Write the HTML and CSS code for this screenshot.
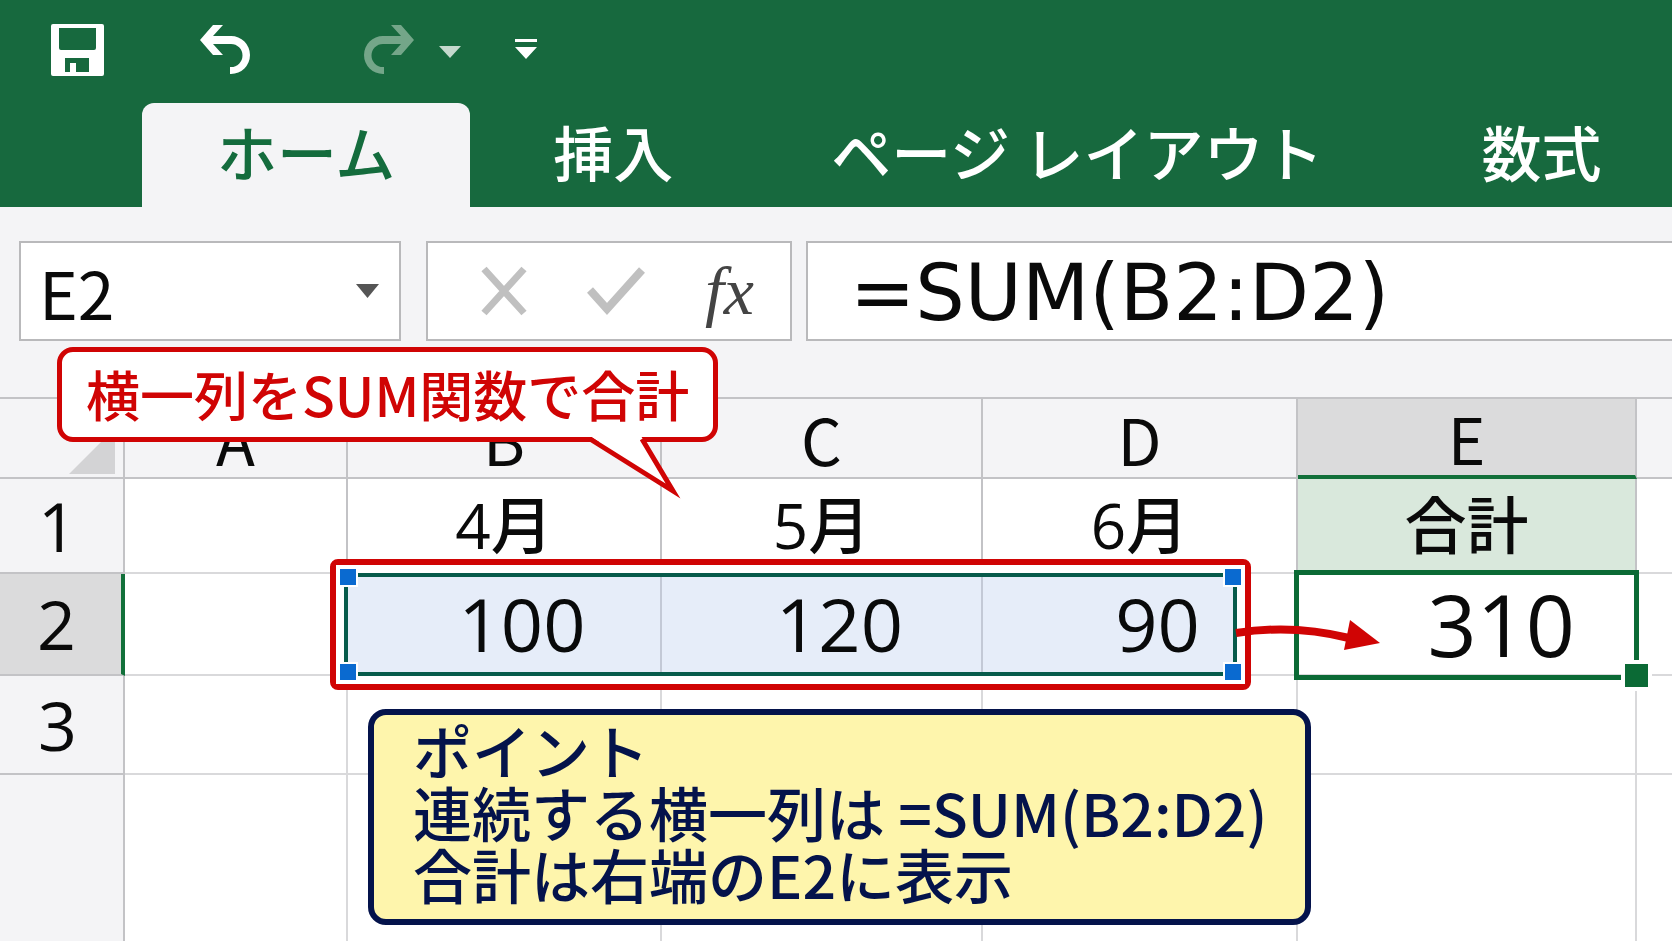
FILE: index.html
```html
<!DOCTYPE html>
<html lang="ja">
<head>
    <meta charset="UTF-8">
    <meta name="viewport" content="width=device-width, initial-scale=1.0">
    <title>横一列をSUM関数で合計</title>
    <link rel="stylesheet" href="styles.css">
</head>
<body>
    <header class="ribbon">
        <div class="quick-access">
            <button class="save" aria-label="上書き保存">
                <svg width="53" height="52" viewBox="0 0 53 52">
                    <path fill="#fff" fill-rule="evenodd" d="M2 0H51Q53 0 53 2V50Q53 52 51 52H2Q0 52 0 50V2Q0 0 2 0ZM8 4V24Q8 26 10 26H43Q45 26 45 24V4ZM14 34V48H19V39H25V48H38V34Z"/>
                </svg>
            </button>
            <button class="undo" aria-label="元に戻す">
                <svg width="50" height="50" viewBox="0 0 50 50">
                    <path fill="#fff" d="M0 15L13 0H23L13 11H31A19 19 0 0 1 31 49H30V42H31A11 11 0 0 0 31 19H13L23 30H13Z"/>
                </svg>
            </button>
            <button class="redo" aria-label="やり直し">
                <svg width="50" height="50" viewBox="0 0 50 50">
                    <path fill="#74a689" d="M50 15L37 0H27L37 11H19A19 19 0 0 0 19 49H20V42H19A11 11 0 0 1 19 19H37L27 30H37Z"/>
                </svg>
            </button>
            <button class="redo-menu" aria-label="やり直しの一覧">
                <svg width="22" height="18" viewBox="0 0 22 18"><path fill="#c5d9cd" d="M0 5H22L11 17Z"/></svg>
            </button>
            <button aria-label="クイック アクセスのカスタマイズ">
                <svg width="22" height="24" viewBox="0 0 22 24"><path fill="#fff" d="M0 1H22V4H0ZM0 9H22L11 21Z"/></svg>
            </button>
        </div>
        <nav class="tabs">
            <button class="tab active">ホーム</button>
            <button class="tab">挿入</button>
            <button class="tab">ページ レイアウト</button>
            <button class="tab">数式</button>
        </nav>
    </header>

    <div class="formula-bar">
        <div class="name-box">
            <select aria-label="名前ボックス">
                <option>E2</option>
            </select>
            <svg width="23" height="14" viewBox="0 0 23 14"><path fill="#555" d="M0 0H23L11.500 14Z"/></svg>
        </div>
        <div class="formula-buttons">
            <button aria-label="キャンセル">
                <svg width="48" height="50" viewBox="0 0 48 50"><path fill="none" stroke="#c0c0c0" stroke-width="7" d="M4 3L44 47M44 3L4 47"/></svg>
            </button>
            <button aria-label="入力">
                <svg width="58" height="50" viewBox="0 0 58 50"><path fill="none" stroke="#c0c0c0" stroke-width="8" d="M3 24L20 43L55 4"/></svg>
            </button>
            <button class="fx" aria-label="関数の挿入">fx</button>
        </div>
        <input class="formula" type="text" aria-label="数式バー" value="=SUM(B2:D2)">
    </div>

    <main class="sheet">
        <table>
            <colgroup>
                <col class="col-head">
                <col class="col-a">
                <col class="col-b">
                <col class="col-c">
                <col class="col-d">
                <col class="col-e">
                <col>
            </colgroup>
            <thead>
                <tr>
                    <th class="corner"><svg width="46" height="46" viewBox="0 0 46 46"><path fill="#d3d3d5" d="M46 0V46H0Z"/></svg></th>
                    <th>A</th>
                    <th>B</th>
                    <th>C</th>
                    <th>D</th>
                    <th class="current">E</th>
                    <th></th>
                </tr>
            </thead>
            <tbody>
                <tr class="row-1">
                    <th>1</th>
                    <td></td>
                    <td>4月</td>
                    <td>5月</td>
                    <td>6月</td>
                    <td class="total-head">合計</td>
                    <td></td>
                </tr>
                <tr class="row-2">
                    <th class="current">2</th>
                    <td></td>
                    <td class="number">100</td>
                    <td class="number">120</td>
                    <td class="number">90</td>
                    <td class="total">310<span class="fill-handle"></span></td>
                    <td></td>
                </tr>
                <tr class="row-3">
                    <th>3</th>
                    <td></td>
                    <td></td>
                    <td></td>
                    <td></td>
                    <td></td>
                    <td></td>
                </tr>
                <tr class="row-4">
                    <th></th>
                    <td></td>
                    <td></td>
                    <td></td>
                    <td></td>
                    <td></td>
                    <td></td>
                </tr>
            </tbody>
        </table>

        <!-- summed range B2:D2 -->
        <div class="range-frame">
            <div class="range">
                <span class="handle top left"></span>
                <span class="handle top right"></span>
                <span class="handle bottom left"></span>
                <span class="handle bottom right"></span>
            </div>
        </div>
        <svg class="arrow" width="146" height="40" viewBox="0 0 146 40">
            <path fill="none" stroke="#d00404" stroke-width="8" d="M1 16Q58 7 114 21"/>
            <path fill="#d00404" d="M115 3L145 26L109 33Z"/>
        </svg>

        <div class="callout">
            横一列をSUM関数で合計
            <svg class="tail" width="104" height="68" viewBox="0 0 104 68">
                <path fill="#fff" d="M8 2H59L91 56Z"/>
                <path fill="none" stroke="#d00404" stroke-width="5" stroke-miterlimit="10" d="M8 5L91 57L60 5"/>
            </svg>
        </div>

        <div class="point">
            <p>ポイント</p>
            <p>連続する横一列は =SUM(B2:D2)</p>
            <p>合計は右端のE2に表示</p>
        </div>
    </main>
</body>
</html>
```
FILE: styles.css
```css
* {
    box-sizing: border-box;
}

body {
    margin: 0;
    min-height: 100vh;
    overflow: hidden;
    background: #f4f4f6;
    color: #0a0a0a;
    font-family: 'Noto Sans CJK JP', sans-serif;
    font-weight: 500;
}

button {
    padding: 0;
    border: none;
    background: none;
    font: inherit;
    color: inherit;
    cursor: pointer;
}

svg {
    display: block;
}

/* ribbon */
.ribbon {
    background: #17693e;
}

.quick-access {
    display: flex;
    align-items: center;
    height: 103px;
    padding: 0 0 4px 51px;
}

.save {
    margin-right: 96px;
}

.undo {
    margin-right: 114px;
}

.redo {
    margin-right: 25px;
}

.redo-menu {
    margin-right: 54px;
}

.tabs {
    display: flex;
    gap: 8px;
    padding-left: 142px;
}

.tab {
    height: 104px;
    padding: 0 75px 8px;
    border-radius: 12px 12px 0 0;
    color: #fff;
    font-size: 60px;
    line-height: 60px;
    white-space: nowrap;
}

.tab.active {
    background: #f4f4f6;
    color: #146c3d;
}

/* formula bar */
.formula-bar {
    display: flex;
    height: 190px;
    padding: 34px 0 56px 19px;
}

.name-box,
.formula-buttons,
.formula {
    border: 2px solid #b9b9bb;
    background: #fff;
}

.name-box {
    display: flex;
    align-items: center;
    width: 382px;
    margin-right: 25px;
    padding-right: 20px;
}

.name-box select {
    flex: 1;
    height: 100%;
    padding: 0 0 6px 18px;
    border: none;
    background: none;
    color: inherit;
    font: inherit;
    font-size: 66px;
    font-weight: 400;
    appearance: none;
}

.formula-buttons {
    display: flex;
    align-items: center;
    justify-content: space-between;
    width: 366px;
    margin-right: 14px;
    padding: 0 36px 0 52px;
}

.fx {
    color: #444;
    font-family: 'Liberation Serif', serif;
    font-size: 68px;
    font-style: italic;
    line-height: 68px;
}

.formula {
    flex: 1;
    min-width: 0;
    padding: 4px 0 0 42px;
    border-right: none;
    color: inherit;
    font-family: 'DejaVu Sans', sans-serif;
    font-size: 78px;
}

/* sheet */
.sheet {
    position: relative;
    border-top: 2px solid #c3c3c6;
}

table {
    width: 100%;
    table-layout: fixed;
    border-spacing: 0;
    background: #fff;
}

.col-head {
    width: 125px;
}

.col-a {
    width: 223px;
}

.col-b {
    width: 314px;
}

.col-c {
    width: 321px;
}

.col-d {
    width: 315px;
}

.col-e {
    width: 339px;
}

th,
td {
    padding: 0;
    border-right: 2px solid #d9d9db;
    border-bottom: 2px solid #d9d9db;
    font-size: 64px;
    font-weight: 400;
    line-height: 64px;
    text-align: center;
}

th {
    border-color: #c3c3c6;
    background: #f4f4f6;
}

tbody {
    font-family: 'Open Sans', 'Noto Sans CJK JP', sans-serif;
}

tbody th,
tbody td {
    font-weight: 500;
}

tbody th {
    padding-right: 8px;
    font-size: 68px;
}

thead tr {
    height: 80px;
}

.row-1 {
    height: 95px;
}

.row-1 td {
    padding-bottom: 2px;
    border-right-color: #c3c3c6;
    font-size: 62px;
}

.row-2 {
    height: 102px;
}

.row-3 {
    height: 99px;
}

.row-4 {
    height: 168px;
}

th:last-child,
td:last-child {
    border-right: none;
}

.corner svg {
    margin: 26px 0 0 69px;
}

th.current {
    background: #dbdbdc;
}

thead .current {
    border-bottom: 4px solid #12703a;
}

tbody .current {
    border-right: 4px solid #12703a;
}

.total-head {
    background: #d9e8dc;
}

.number {
    padding-left: 36px;
    font-size: 74px;
}

.total {
    position: relative;
    padding-right: 60px;
    font-size: 86px;
    text-align: right;
}

/* border of the active cell, drawn over the grid lines */
.total::before {
    content: '';
    position: absolute;
    inset: -4px -4px -6px -4px;
    border: 5px solid #0b6a35;
}

.fill-handle {
    position: absolute;
    right: -17px;
    bottom: -17px;
    width: 31px;
    height: 31px;
    border: 4px solid #fff;
    background: #0b6a35;
}

.range-frame {
    position: absolute;
    top: 160px;
    left: 330px;
    width: 921px;
    height: 131px;
    padding: 8px;
    border: 6px solid #d00404;
    border-radius: 8px;
}

.range {
    position: relative;
    height: 100%;
    border: 4px solid #075b4b;
    box-shadow: 0 0 0 8px #fff;
}

/* tint that leaves the digits black */
.range::before {
    content: '';
    position: absolute;
    inset: 0;
    background: #e6edf9;
    mix-blend-mode: multiply;
}

.handle {
    position: absolute;
    width: 20px;
    height: 20px;
    border: 2px solid #fff;
    background: #0a6ad0;
}

.handle.top {
    top: -10px;
}

.handle.bottom {
    bottom: -10px;
}

.handle.left {
    left: -10px;
}

.handle.right {
    right: -10px;
}

.arrow {
    position: absolute;
    top: 218px;
    left: 1235px;
}

.callout {
    position: absolute;
    top: -52px;
    left: 57px;
    padding: 15px 24px 16px;
    border: 5px solid #d00404;
    border-radius: 16px;
    background: #fff;
    color: #d00404;
    font-size: 54px;
    line-height: 54px;
    white-space: nowrap;
}

.tail {
    position: absolute;
    top: 82px;
    left: 520px;
}

.point {
    position: absolute;
    top: 310px;
    left: 368px;
    width: 943px;
    padding: 4px 39px 14px;
    border: 6px solid #04134b;
    border-radius: 18px;
    background: #fef5ac;
    color: #04134b;
    font-size: 59px;
    line-height: 62px;
    white-space: nowrap;
}

.point p {
    margin: 0;
}
```
